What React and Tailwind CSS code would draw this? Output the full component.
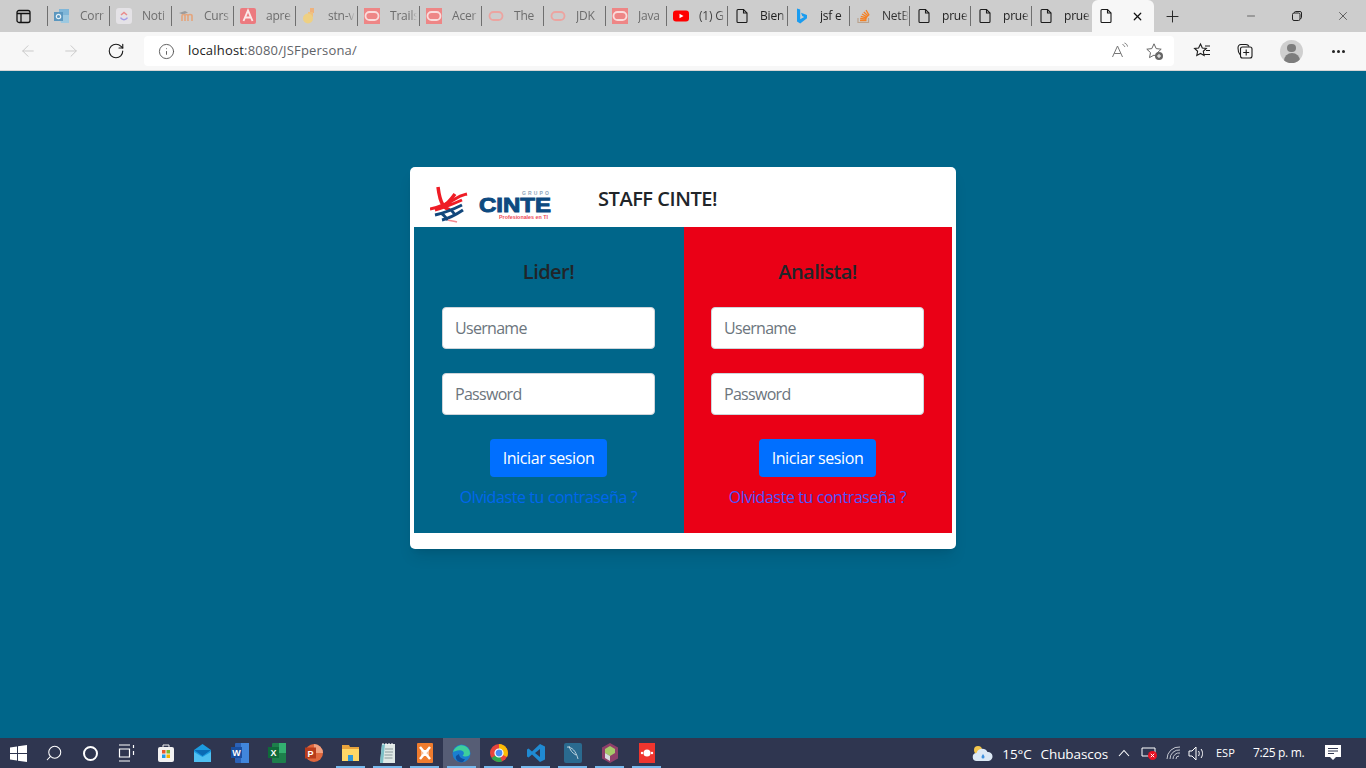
import { ArrowLeft, ArrowRight, RotateCw, Info, Plus, X, Minus, Search } from 'lucide-react';

const FONT = "font-['Open_Sans','Noto_Sans',sans-serif]";

function PageIcon() {
  return (
    <svg width="16" height="16" viewBox="0 0 16 16" fill="none" stroke="#1b1b1b" strokeWidth="1.1">
      <path d="M3 2.5a1 1 0 0 1 1-1h5.5L13 5v8.5a1 1 0 0 1-1 1H4a1 1 0 0 1-1-1z" />
      <path d="M9.5 1.5V5H13" />
    </svg>
  );
}

function OracleIcon({ box }) {
  return (
    <svg width="16" height="16" viewBox="0 0 16 16">
      {box && <rect width="16" height="16" fill="#ee8686" />}
      <rect x="1.5" y="4" width="13" height="8" rx="4" fill="none" stroke={box ? '#f9dcdc' : '#eca4a0'} strokeWidth="1.8" />
    </svg>
  );
}

const favicons = {
  outlook: (
    <svg width="16" height="16" viewBox="0 0 16 16">
      <path d="M5 1h10v12H5z" fill="#7fb6d8" />
      <path d="M5 7h10v8H7z" fill="#9cc8e0" />
      <rect x="0" y="4" width="9" height="9" fill="#5b97bf" />
      <circle cx="4.5" cy="8.5" r="2.2" fill="none" stroke="#e8f1f6" strokeWidth="1.2" />
    </svg>
  ),
  clickup: (
    <svg width="16" height="16" viewBox="0 0 16 16">
      <rect width="16" height="16" rx="3" fill="#e4e2e6" />
      <path d="M5 7l3-2.6L11 7" fill="none" stroke="#e98b8b" strokeWidth="1.5" />
      <path d="M4.5 9.6C6.5 12.4 9.5 12.4 11.5 9.6" fill="none" stroke="#a49be8" strokeWidth="1.5" />
    </svg>
  ),
  moodle: (
    <svg width="16" height="16" viewBox="0 0 16 16">
      <path d="M1 5l6-2 3 1.5-5 2z" fill="#9c9c9c" />
      <path d="M4 13V8c0-2 3-2 3 0v5M7 8c0-2 3-2 3 0v5M10 8c0-2 4-2 4 0v5" fill="none" stroke="#e3a67f" strokeWidth="1.7" />
    </svg>
  ),
  angular: (
    <svg width="16" height="16" viewBox="0 0 16 16">
      <rect width="16" height="16" rx="2" fill="#ec7a7f" />
      <path d="M3.5 13L8 2.5 12.5 13M5.2 9.5h5.6" fill="none" stroke="#fbe8e8" strokeWidth="1.9" />
    </svg>
  ),
  stn: (
    <svg width="16" height="16" viewBox="0 0 16 16">
      <rect x="8" y="0" width="4" height="5" fill="#eeb27d" />
      <rect x="6" y="4" width="5" height="5" fill="#f0c07f" />
      <circle cx="6" cy="10.5" r="5" fill="#eed083" />
    </svg>
  ),
  youtube: (
    <svg width="16" height="16" viewBox="0 0 16 16">
      <rect y="2.5" width="16" height="11" rx="3" fill="#f00" />
      <path d="M6.5 5.7v4.6L10.5 8z" fill="#fff" />
    </svg>
  ),
  bing: (
    <svg width="16" height="16" viewBox="0 0 16 16">
      <path d="M3 0.5l3.2 1.1v9.7l4-2.3-2-1L7 4.700l6 2.200v3.300L6.200 15.500 3 13.500z" fill="#1a9cf0" />
    </svg>
  ),
  stack: (
    <svg width="16" height="16" viewBox="0 0 16 16" fill="none">
      <path d="M2 10v4.500h10.500V10" stroke="#b9a38f" strokeWidth="1.2" />
      <path d="M4 12.500h6.500M4.200 10.500l6.300.6M4.800 8.300l6.100 1.700M6 6l5.500 3.100M7.800 4l4.600 4.300M10 2.200l3.200 5.200" stroke="#f48024" strokeWidth="1.3" />
    </svg>
  ),
  page: <PageIcon />,
  oracleBox: <OracleIcon box />,
  oracleRing: <OracleIcon />,
};

// separators in the reference are not evenly spaced, so widths are per tab
const tabs = [
  { icon: 'outlook', label: 'Corr', color: 'text-[#6d6d6d]', w: 'w-[62px]' },
  { icon: 'clickup', label: 'Noti', color: 'text-[#6d6d6d]', w: 'w-[62px]' },
  { icon: 'moodle', label: 'Curs', color: 'text-[#6d6d6d]', w: 'w-[62px]' },
  { icon: 'angular', label: 'apre', color: 'text-[#6d6d6d]', w: 'w-[62px]' },
  { icon: 'stn', label: 'stn-v', color: 'text-[#6d6d6d]', w: 'w-[62px]' },
  { icon: 'oracleBox', label: 'Trails', color: 'text-[#6d6d6d]', w: 'w-[62px]' },
  { icon: 'oracleBox', label: 'Acer', color: 'text-[#6d6d6d]', w: 'w-[62px]' },
  { icon: 'oracleRing', label: 'The', color: 'text-[#6d6d6d]', w: 'w-[62px]' },
  { icon: 'oracleRing', label: 'JDK', color: 'text-[#6d6d6d]', w: 'w-[62px]' },
  { icon: 'oracleBox', label: 'Java', color: 'text-[#6d6d6d]', w: 'w-[61px]' },
  { icon: 'youtube', label: '(1) G', color: 'text-[#444]', w: 'w-[61px]' },
  { icon: 'page', label: 'Bien', color: 'text-[#222]', w: 'w-[60px]' },
  { icon: 'bing', label: 'jsf e', color: 'text-[#222]', w: 'w-[62px]' },
  { icon: 'stack', label: 'NetB', color: 'text-[#333]', w: 'w-[60px]' },
  { icon: 'page', label: 'prue', color: 'text-[#222]', w: 'w-[61px]' },
  { icon: 'page', label: 'prue', color: 'text-[#222]', w: 'w-[61px]' },
  { icon: 'page', label: 'prue', color: 'text-[#222]', w: 'w-[61px]' },
];

function Tab({ tab }) {
  return (
    <div className={`flex h-[32px] shrink-0 items-center ${tab.w}`}>
      <div className="h-[20px] w-px shrink-0 bg-[#6f6f6f]" />
      <div className="ml-[6px] w-[16px] shrink-0">{favicons[tab.icon]}</div>
      <div className={`ml-[10px] w-[27px] text-[12px] tracking-[-0.2px] whitespace-nowrap [mask-image:linear-gradient(to_right,black_75%,transparent)] ${tab.color}`}>{tab.label}</div>
    </div>
  );
}

function TabBar() {
  return (
    <div className="flex h-[32px] bg-[#cdcdcd]">
      <div className="flex w-[47px] shrink-0 items-center pl-[16px]">
        <svg width="15" height="15" viewBox="0 0 15 15" fill="none" stroke="#111" strokeWidth="1.3">
          <rect x="1" y="1.5" width="13" height="12" rx="2" />
          <path d="M1 4.500h13M5 4.500v9" />
        </svg>
      </div>
      {tabs.map((tab, i) => (
        <Tab key={i} tab={tab} />
      ))}
      <div className="flex h-[32px] w-[62px] shrink-0 items-center rounded-t-[6px] bg-[#f7f7f7] pl-[6px]">
        <PageIcon />
        <X className="ml-[17px] h-[13px] w-[13px] text-[#111]" strokeWidth={2.2} />
      </div>
      <div className="flex w-[36px] items-center justify-center">
        <Plus className="h-[19px] w-[19px] text-[#222]" strokeWidth={1.2} />
      </div>
      <div className="ml-auto flex">
        <div className="flex w-[46px] items-center justify-center">
          <Minus className="h-[12px] w-[12px] text-[#222]" strokeWidth={1.2} />
        </div>
        <div className="flex w-[46px] items-center justify-center">
          <svg width="12" height="12" viewBox="0 0 12 12" fill="none" stroke="#222">
            <rect x="1.5" y="3" width="7.5" height="7.5" rx="1.5" />
            <path d="M3.500 3V2.500a1 1 0 0 1 1-1h4.500a1.500 1.500 0 0 1 1.500 1.500v4.500a1 1 0 0 1-1 1H9" />
          </svg>
        </div>
        <div className="flex w-[46px] items-center justify-center">
          <X className="h-[14px] w-[14px] text-[#222]" strokeWidth={1.1} />
        </div>
      </div>
    </div>
  );
}

function Toolbar() {
  return (
    <div className="flex h-[39px] items-center border-b border-[#d6d6d6] bg-[#f7f7f7]">
      <ArrowLeft className="ml-[19px] h-[18px] w-[18px] text-[#c9c9c9]" strokeWidth={1.3} />
      <ArrowRight className="ml-[25px] h-[18px] w-[18px] text-[#c9c9c9]" strokeWidth={1.3} />
      <RotateCw className="ml-[27px] h-[18px] w-[18px] text-[#1b1b1b]" strokeWidth={1.5} />
      <div className="ml-[19px] flex h-[30px] w-[1030px] items-center rounded-[4px] bg-white pl-[14px]">
        <Info className="h-[17px] w-[17px] text-[#555]" strokeWidth={1.3} />
        <div className="ml-[13px] text-[13px] tracking-[0.18px] text-[#222]">
          localhost<span className="text-[#5f6368]">:8080/JSFpersona/</span>
        </div>
        <div className="ml-auto flex items-center">
          <svg width="18" height="18" viewBox="0 0 18 18" fill="none" stroke="#777" strokeWidth="1">
            <path d="M1.5 15L6.500 4l5 11M3.200 11.500h6.600M11.500 2.500c1.500.6 2 1.400 2.300 2.500M13.500 1c2 .8 2.800 2 3 3.500" />
          </svg>
          <svg className="mr-[10px] ml-[16px]" width="19" height="19" viewBox="0 0 19 19">
            <path d="M9 1.800l2.200 4.800 5 .6-3.700 3.400 1 5-4.500-2.500-4.500 2.500 1-5L1.800 7.200l5-.6z" fill="none" stroke="#666" strokeWidth="1" />
            <circle cx="14" cy="14" r="4" fill="#666" />
            <path d="M14 12v4M12 14h4" stroke="#fff" />
          </svg>
        </div>
      </div>
      <svg className="ml-[19px]" width="18" height="18" viewBox="0 0 18 18" fill="none" stroke="#1b1b1b" strokeWidth="1.1">
        <path d="M7.500 2l1.800 4 4 .5-3 2.800.8 4.200-3.600-2.100-3.700 2.100.8-4.200-3-2.800 4-.5zM12 4h5M13 8.500h4M11.500 12.500H17" />
      </svg>
      <svg className="ml-[25px]" width="18" height="18" viewBox="0 0 18 18" fill="none" stroke="#1b1b1b" strokeWidth="1.1">
        <rect x="4.500" y="5" width="11.500" height="11" rx="2" />
        <path d="M4 12.500C2.500 11 2 8.500 2 6c0-2 1-3.500 3-3.500h5c1.500 0 2.500.8 3 2M10.200 7.500v6M7.200 10.500h6" />
      </svg>
      <div className="ml-[26px] flex h-[23px] w-[23px] flex-col items-center overflow-hidden rounded-full bg-[#cfcfcf]">
        <div className="mt-[4px] h-[9px] w-[9px] rounded-full bg-[#7d7d7d]" />
        <div className="mt-[1px] h-[10px] w-[16px] rounded-t-full bg-[#7d7d7d]" />
      </div>
      <div className="ml-[29px] flex gap-[2px]">
        <div className="h-[3px] w-[3px] rounded-full bg-[#222]" />
        <div className="h-[3px] w-[3px] rounded-full bg-[#222]" />
        <div className="h-[3px] w-[3px] rounded-full bg-[#222]" />
      </div>
    </div>
  );
}

function Logo() {
  return (
    <svg className="mb-[2px] self-end" width="122" height="40" viewBox="0 0 122 40">
      <path d="M8 2c1 8 3 15 5 18s4 4 7 5M25 9c-3 4-6 8-10 11" fill="none" stroke="#ef1c25" strokeWidth="3.5" />
      <path d="M0 24c9-2 19-6 25-10s8-4 12-5M5 25c9-2 18-6 27-10" fill="none" stroke="#ef1c25" strokeWidth="3" />
      <path d="M5 30c9-2 19-6 27-10M12 35c8-2 15-6 21-10M11 28c3 2 5 5 7 7M20 24c2 2 4 4 5 6" fill="none" stroke="#12477c" strokeWidth="3" />
      <path d="M18 35c3 1 6 1 9 2" fill="none" stroke="#f48a90" strokeWidth="1.5" />
      <text x="49" y="26.5" fontFamily="Liberation Sans, sans-serif" fontWeight="700" fontSize="19.5" fill="#0d4a80" textLength="72" lengthAdjust="spacingAndGlyphs" stroke="#0d4a80" strokeWidth="0.9">CINTE</text>
      <text x="92" y="9.7" fontFamily="Liberation Sans, sans-serif" fontWeight="700" fontSize="5" fill="#8fa6bc" textLength="27" lengthAdjust="spacing">GRUPO</text>
      <text x="69" y="34" fontFamily="Liberation Sans, sans-serif" fontWeight="700" fontSize="4.5" fill="#ef4a55" textLength="49" lengthAdjust="spacingAndGlyphs">Profesionales en TI</text>
    </svg>
  );
}

function LoginColumn({ title, bg, linkColor, width }) {
  return (
    <form className={`flex h-[306px] flex-col items-center pt-[33px] pr-px ${bg} ${width}`}>
      <h2 className="text-[20px] leading-[24px] font-semibold tracking-[-0.55px] text-[#212529]">{title}</h2>
      <input
        className="mt-[23px] h-[42px] w-[213px] rounded-[4px] border border-[#ced4da] bg-white px-[12px] text-[16px] tracking-[-0.7px] placeholder:text-[#6c757d]"
        placeholder="Username"
      />
      <input
        className="mt-[24px] h-[42px] w-[213px] rounded-[4px] border border-[#ced4da] bg-white px-[12px] text-[16px] tracking-[-0.7px] placeholder:text-[#6c757d]"
        placeholder="Password"
      />
      <button type="button" className="mt-[24px] h-[38px] w-[117px] rounded-[4px] bg-[#006fff] text-[16px] tracking-[-0.4px] text-white">
        Iniciar sesion
      </button>
      <a className={`mt-[8px] text-[16px] leading-[24px] tracking-[-0.42px] ${linkColor}`}>Olvidaste tu contraseña ?</a>
    </form>
  );
}

function LoginCard() {
  return (
    <div className="w-[546px] rounded-[5px] bg-white px-[4px] pb-[16px] shadow-lg">
      <div className="flex h-[60px] items-center pt-[3px] pl-[16px]">
        <Logo />
        <div className="ml-[46px] text-[20px] font-semibold tracking-[-0.45px] text-[#212529]">STAFF CINTE!</div>
      </div>
      <div className="flex">
        <LoginColumn title="Lider!" bg="bg-[#00668a]" linkColor="text-[#0066ee]" width="w-[270px]" />
        <LoginColumn title="Analista!" bg="bg-[#ea0016]" linkColor="text-[#4d55ff]" width="w-[268px]" />
      </div>
    </div>
  );
}

function TaskIcon({ children, active, running, narrow }) {
  return (
    <div className={`relative flex h-[30px] shrink-0 items-center justify-center ${narrow ? 'w-[36px]' : 'w-[37px]'} ${active ? 'bg-[#565d75]' : ''}`}>
      {children}
      {running && <div className="absolute bottom-0 left-[4px] h-[2px] w-[29px] bg-[#76b9ed]" />}
    </div>
  );
}

function Taskbar() {
  return (
    <div className={`flex h-[30px] items-center bg-[#2f3650] text-white ${FONT}`}>
      <TaskIcon narrow>
        <svg width="17" height="17" viewBox="0 0 17 17" fill="#fff">
          <path d="M0 2.500l7-1v6.500H0zM8 1.300L17 0v8H8zM0 9h7v6.500l-7-1zM8 9h9v8l-9-1.300z" />
        </svg>
      </TaskIcon>
      <TaskIcon narrow>
        <Search className="h-[18px] w-[18px] scale-x-[-1] text-white" strokeWidth={1.4} />
      </TaskIcon>
      <TaskIcon narrow>
        <div className="h-[15px] w-[15px] rounded-full border-2 border-white" />
      </TaskIcon>
      <TaskIcon narrow>
        <svg width="17" height="18" viewBox="0 0 17 18" fill="none" stroke="#fff" strokeWidth="1.2">
          <path d="M1 1h11M1 17h11M1.500 5h10v8h-10zM15.500 1v3M15.500 7v4" />
        </svg>
      </TaskIcon>
      <div className="w-[3px]" />
      <TaskIcon>
        <svg width="16" height="20" viewBox="0 0 16 20">
          <rect y="4" width="16" height="15" rx="2" fill="#f2f2f2" />
          <path d="M5 4V2h6v2" fill="none" stroke="#f2f2f2" />
          <rect x="4" y="7" width="3.5" height="3.5" fill="#e85a2c" />
          <rect x="8.5" y="7" width="3.5" height="3.5" fill="#7cb82f" />
          <rect x="4" y="11.5" width="3.5" height="3.5" fill="#1e9bea" />
          <rect x="8.5" y="11.5" width="3.5" height="3.5" fill="#f7b500" />
        </svg>
      </TaskIcon>
      <TaskIcon>
        <svg width="17" height="18" viewBox="0 0 17 18">
          <path d="M0 6l8.500-6L17 6v12H0z" fill="#1b9be0" />
          <path d="M0 6h17l-8.500 6z" fill="#0a6bb5" />
          <path d="M0 18V8l8.500 5L17 8v10z" fill="#4fc0f2" />
        </svg>
      </TaskIcon>
      <TaskIcon>
        <svg width="18" height="20" viewBox="0 0 18 20">
          <rect x="4" y="0" width="14" height="20" rx="1" fill="#2b62b8" />
          <rect x="10" y="0" width="8" height="20" fill="#4186dc" />
          <rect x="0" y="4" width="11" height="11" fill="#1a4fa0" />
          <text x="5.5" y="13" textAnchor="middle" fontFamily="Liberation Sans" fontWeight="700" fontSize="9" fill="#fff">W</text>
        </svg>
      </TaskIcon>
      <TaskIcon>
        <svg width="18" height="20" viewBox="0 0 18 20">
          <rect x="4" y="0" width="14" height="20" rx="1" fill="#1d7f4b" />
          <rect x="11" y="0" width="7" height="10" fill="#33b070" />
          <rect x="0" y="4" width="11" height="11" fill="#0f6a3a" />
          <text x="5.5" y="13" textAnchor="middle" fontFamily="Liberation Sans" fontWeight="700" fontSize="9" fill="#fff">X</text>
        </svg>
      </TaskIcon>
      <TaskIcon>
        <svg width="18" height="20" viewBox="0 0 18 20">
          <circle cx="9" cy="10" r="9" fill="#e0673d" />
          <path d="M9 1a9 9 0 0 1 9 9H9z" fill="#f0a080" />
          <rect x="0" y="4.5" width="11" height="11" fill="#b83c1c" />
          <text x="5.5" y="13.5" textAnchor="middle" fontFamily="Liberation Sans" fontWeight="700" fontSize="9" fill="#fff">P</text>
        </svg>
      </TaskIcon>
      <TaskIcon running>
        <svg width="17" height="16" viewBox="0 0 17 16">
          <path d="M0 0h7l1 2h9v14H0z" fill="#e8a33c" />
          <rect y="4" width="17" height="12" fill="#ffd766" />
          <rect x="6" y="10" width="5" height="6" fill="#2f97d9" />
        </svg>
      </TaskIcon>
      <TaskIcon running>
        <svg width="15" height="20" viewBox="0 0 15 20">
          <path d="M2 1h13v19H0z" fill="#dfe8e6" />
          <path d="M0 20L2 1h3L3 20z" fill="#7cc0c8" />
          <path d="M5 6h8M5 9h8M4.500 12h8M4.500 15h8" stroke="#8a9a9c" />
          <path d="M3 0v2M6 0v2M9 0v2M12 0v2" stroke="#fff" />
        </svg>
      </TaskIcon>
      <TaskIcon running>
        <svg width="16" height="20" viewBox="0 0 16 20">
          <rect width="16" height="20" rx="1" fill="#ef7c2e" />
          <path d="M3 4l10 12M13 4L3 16" stroke="#fff" strokeWidth="2.5" />
          <rect x="5" y="7.5" width="6" height="5" fill="none" stroke="#fff" />
        </svg>
      </TaskIcon>
      <TaskIcon active running>
        <svg width="19" height="19" viewBox="0 0 19 19">
          <circle cx="9.5" cy="9.5" r="9" fill="#1a7fd0" />
          <path d="M1 8c2-6 8-8 12-6 3 1.500 5 4 5 7.500 0 2-2 3-4.500 3-1.500 0-2.500-.5-3-1 2-1 2-4-1-5-3-1-7 .5-8.500 1.500z" fill="#3ecf9c" />
          <path d="M7 10c0 3 3 5 6 5l-2 3c-5 1-8-3-7-6z" fill="#0f4f9e" />
        </svg>
      </TaskIcon>
      <TaskIcon running>
        <svg width="18" height="18" viewBox="0 0 18 18">
          <circle cx="9" cy="9" r="9" fill="#e8453c" />
          <path d="M9 9L1.500 14A9 9 0 0 0 12 17.500z" fill="#2fa84f" />
          <path d="M9 0a9 9 0 0 1 8 13L9 9V0z" fill="#fbbc05" />
          <circle cx="9" cy="9" r="4" fill="#4a8af4" stroke="#fff" strokeWidth="1.2" />
        </svg>
      </TaskIcon>
      <TaskIcon running>
        <svg width="18" height="18" viewBox="0 0 18 18">
          <path d="M13 0l5 2.500v13L13 18 5 10.500 1.500 13.500 0 12.500V5.500l1.500-1L5 7.500z" fill="#1f8ad2" />
          <path d="M13 5L8 9l5 4z" fill="#2f3650" />
        </svg>
      </TaskIcon>
      <TaskIcon running>
        <svg width="18" height="20" viewBox="0 0 18 20">
          <rect width="18" height="20" rx="2" fill="#2a6a8f" />
          <path d="M3 4c5 0 9 4 11 12M5 3c1 4 3 7 7 9" fill="none" stroke="#c9dbe4" strokeWidth="0.9" />
        </svg>
      </TaskIcon>
      <TaskIcon running>
        <svg width="16" height="20" viewBox="0 0 16 20">
          <path d="M8 0l8 4.500v11L8 20l-8-4.500v-11z" fill="#8f3f6a" />
          <path d="M8 3l5 3v4l-5 3-5-3V6z" fill="#a6c96a" />
          <path d="M3 10l5 3v5l-5-3z" fill="#d8dbe0" />
        </svg>
      </TaskIcon>
      <TaskIcon running>
        <svg width="16" height="20" viewBox="0 0 16 20">
          <rect width="16" height="20" fill="#f0352e" />
          <circle cx="8" cy="10" r="3.5" fill="#fff" />
          <circle cx="3" cy="10" r="1.2" fill="#fff" />
          <circle cx="13" cy="10" r="1.2" fill="#fff" />
        </svg>
      </TaskIcon>

      <div className="ml-auto flex items-center text-[13px]">
        <svg width="22" height="18" viewBox="0 0 22 18">
          <circle cx="7" cy="6" r="4" fill="#f3c64c" />
          <path d="M6 17a4 4 0 0 1-.500-8 6 6 0 0 1 11-1 4.500 4.500 0 0 1 1 9z" fill="#dce9f5" />
          <path d="M12 10c1 1.500 1.500 2.300 1.500 3a1.500 1.500 0 0 1-3 0c0-.7.500-1.500 1.500-3z" fill="#3f91de" />
        </svg>
        <span className="mt-[2px] ml-[9px] text-[13.5px] tracking-[-0.1px]">15°C</span>
        <span className="mt-[2px] ml-[9px] text-[13.5px] tracking-[-0.1px]">Chubascos</span>
        <svg className="ml-[10px]" width="12" height="8" viewBox="0 0 12 8" fill="none" stroke="#fff" strokeWidth="1.1">
          <path d="M1 7l5-5.500L11 7" />
        </svg>
        <svg className="ml-[11px]" width="16" height="14" viewBox="0 0 16 14">
          <path d="M1 2h13v8H1z" fill="none" stroke="#fff" />
          <circle cx="11.5" cy="9.5" r="4.5" fill="#e81123" />
          <path d="M9.800 7.800l3.400 3.400M13.200 7.800l-3.400 3.400" stroke="#fff" />
        </svg>
        <svg className="ml-[9px]" width="16" height="14" viewBox="0 0 16 14" fill="none" stroke="#d5d8df" strokeWidth="0.9">
          <path d="M1 13A12 12 0 0 1 14 1M4 13a9 9 0 0 1 10-9M7 13a6 6 0 0 1 7-6M10 13a3 3 0 0 1 3-3" />
        </svg>
        <svg className="ml-[6px]" width="17" height="15" viewBox="0 0 17 15" fill="none" stroke="#fff" strokeWidth="1">
          <path d="M1 5h3l4-4v13l-4-4H1zM10.500 5c1 1.500 1 3.500 0 5M13 3c2 2.500 2 6.500 0 9" />
        </svg>
        <span className="ml-[11px] w-[20px] text-[11px]">ESP</span>
        <span className="ml-[17px] w-[52px] text-[12px] tracking-[-0.35px] whitespace-nowrap">7:25 p. m.</span>
        <svg className="mr-[25px] ml-[20px]" width="16" height="16" viewBox="0 0 16 16">
          <path d="M0 0h16v12h-5l-3 3-3-3H0z" fill="#fff" />
          <path d="M3 3.500h10M3 6h10M3 8.500h6" stroke="#2f3650" />
        </svg>
      </div>
    </div>
  );
}

export default function App() {
  return (
    <div className={`flex h-screen flex-col overflow-hidden ${FONT}`}>
      <TabBar />
      <Toolbar />
      <main className="flex flex-1 justify-center bg-[#00668a] pt-[96px]">
        <div>
          <LoginCard />
        </div>
      </main>
      <Taskbar />
    </div>
  );
}
